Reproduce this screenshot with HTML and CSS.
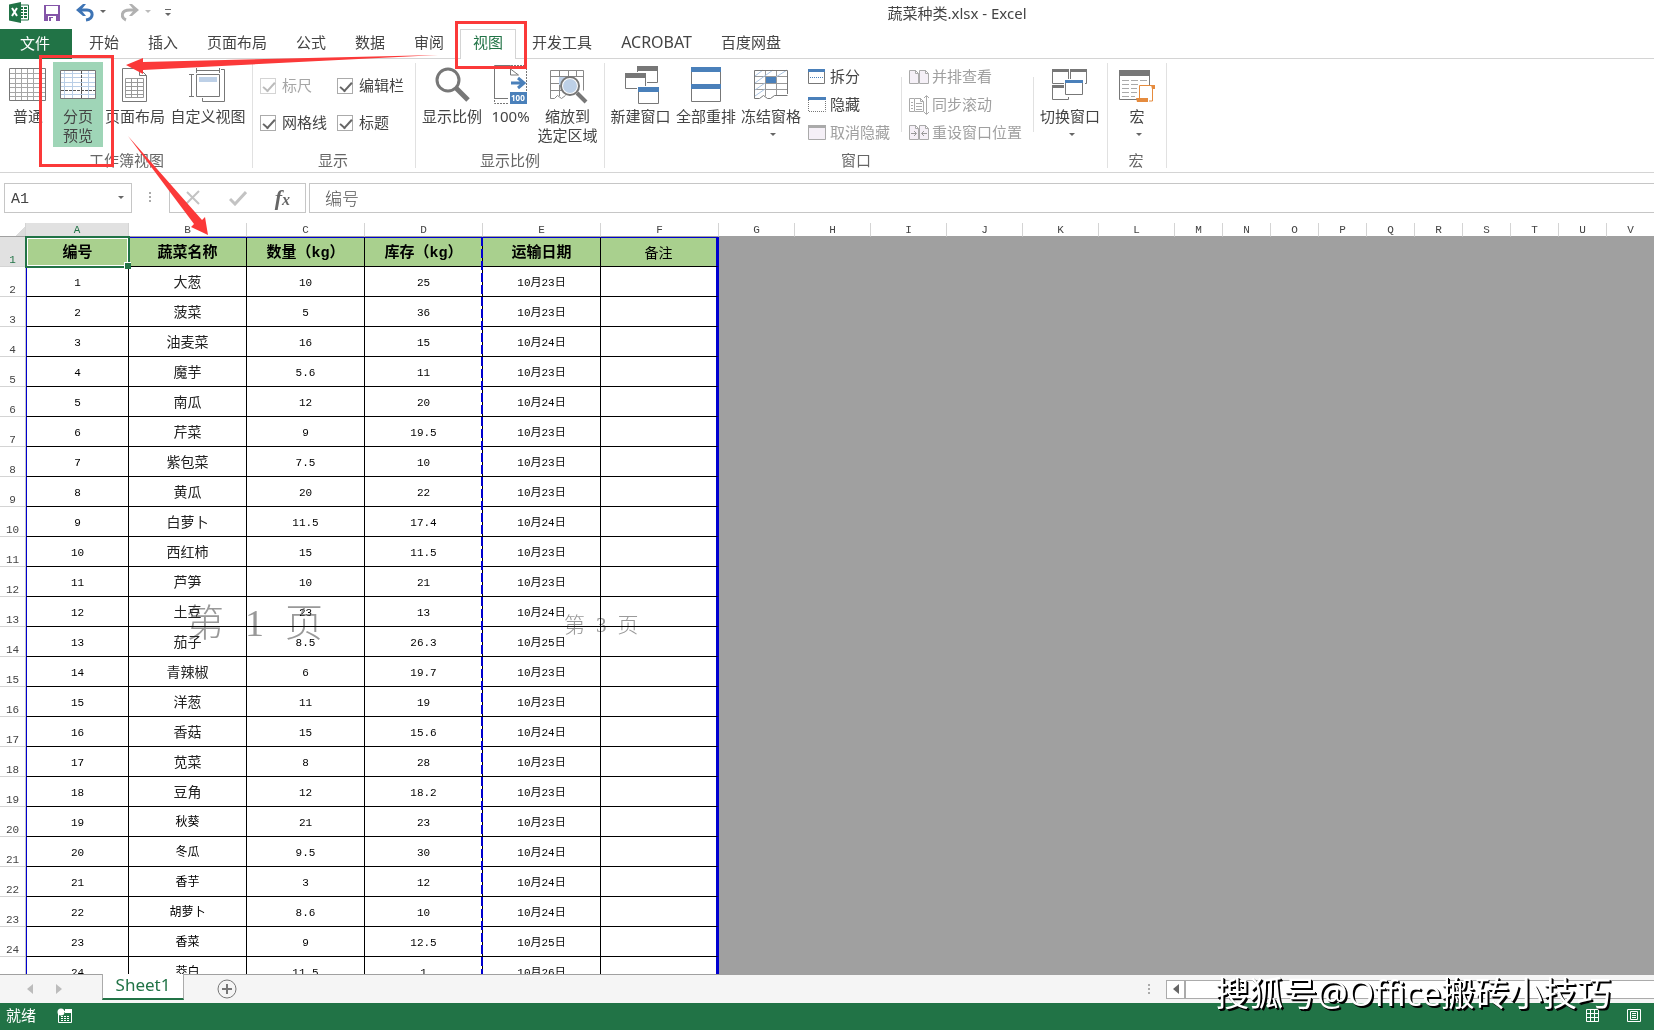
FILE: index.html
```html
<!DOCTYPE html>
<html lang="zh-CN">
<head>
    <meta charset="UTF-8">
    <meta name="viewport" content="width=device-width, initial-scale=1.0">
    <title>蔬菜种类.xlsx - Excel</title>
    <link rel="stylesheet" href="styles.css">
</head>
<body>
    <header class="title-bar">
        <div class="quick-access">
            <svg class="logo" width="22" height="22" viewBox="0 0 22 22">
                <path d="M11 3h9.500v15H11z" fill="#fff" stroke="#217346"/>
                <path d="M13 6h2M16 6h3M13 9h2M16 9h3M13 12h2M16 12h3M13 15h2M16 15h3" stroke="#217346" stroke-width="2"/>
                <path d="M1 2.500L13 0v21L1 18.500z" fill="#217346"/>
                <path d="M4 6l5 8M9 6l-5 8" stroke="#fff" stroke-width="2"/>
            </svg>
            <button class="save" aria-label="保存">
                <svg width="16" height="16" viewBox="0 0 16 16">
                    <path d="M0 0h16v16H0z" fill="#8455a8"/>
                    <path d="M2 1h12v8H2zM4 11h8v5H4z" fill="#fff"/>
                    <path d="M5 12h4v4H5z" fill="#8455a8"/><path d="M7 13h2v3H7z" fill="#fff"/>
                </svg>
            </button>
            <button class="undo" aria-label="撤消">
                <svg width="30" height="18" viewBox="0 0 30 18">
                    <path d="M3 6h8c7 0 7 9-1 10" fill="none" stroke="#3e74b5" stroke-width="3"/>
                    <path d="M0 6l7-6h3L5 6l5 6H7z" fill="#3e74b5"/>
                    <path d="M24 6h6l-3 3z" fill="#666"/>
                </svg>
            </button>
            <button class="redo" aria-label="恢复">
                <svg width="30" height="18" viewBox="0 0 30 18">
                    <path d="M15 6H9C-1 6 0 14 5 16" fill="none" stroke="#b1b1b1" stroke-width="3"/>
                    <path d="M18 6l-7-6H8l5 6-5 6h3z" fill="#b1b1b1"/>
                    <path d="M24 6h6l-3 3z" fill="#bbb"/>
                </svg>
            </button>
            <button class="customize" aria-label="自定义快速访问工具栏">
                <svg width="6" height="8" viewBox="0 0 6 8"><path d="M0 .500h6" stroke="#666"/><path d="M0 4h6L3 7z" fill="#666"/></svg>
            </button>
        </div>
        <h1>蔬菜种类.xlsx - Excel</h1>
    </header>

    <nav class="tabs">
        <button class="file">文件</button>
        <button>开始</button>
        <button>插入</button>
        <button>页面布局</button>
        <button>公式</button>
        <button>数据</button>
        <button>审阅</button>
        <button class="active">视图</button>
        <button>开发工具</button>
        <button class="latin">ACROBAT</button>
        <button>百度网盘</button>
    </nav>

    <div class="ribbon">
        <section class="group group-views">
            <div class="items">
                <button class="big w50">
                    <svg width="40" height="42" viewBox="0 0 40 42">
                        <path d="M7.500 4v32M13.500 4v32M19.500 4v32M25.500 4v32M31.500 4v32M2 8.500h35M2 13.500h35M2 18.500h35M2 22.500h35M2 27.500h35M2 31.500h35" stroke="#a6a6a6"/>
                        <path d="M1.500 3.500h36v32h-36z" fill="none" stroke="#777"/>
                    </svg>
                    <span>普通</span>
                </button>
                <button class="big w50 pressed">
                    <svg width="40" height="42" viewBox="0 0 40 42">
                        <path d="M2.500 5.500h35v28h-35z" fill="#fff" stroke="#777"/>
                        <path d="M6.500 6v27M14.500 6v27M30.500 6v27M3 8.500h34M3 12.500h34M3 17.500h34M3 21.500h34M3 29.500h34" stroke="#b9cee6"/>
                        <path d="M23.500 6v27M3 25.500h34" stroke="#555" stroke-dasharray="3 1"/>
                    </svg>
                    <span>分页<br>预览</span>
                </button>
                <button class="big w64">
                    <svg width="40" height="42" viewBox="0 0 40 42">
                        <path d="M7.500 3.500h17l7 7v26h-24zM24.500 3.500v7h7" fill="#fff" stroke="#777"/>
                        <path d="M10.500 13.500h18v19h-18zM16.500 14v18M22.500 14v18M11 17.500h17M11 21.500h17M11 25.500h17M11 29.500h17" fill="none" stroke="#999"/>
                    </svg>
                    <span>页面布局</span>
                </button>
                <button class="big w82">
                    <svg width="40" height="42" viewBox="0 0 40 42">
                        <path d="M8.500 9.500h23v22h-23z" fill="#fff" stroke="#777"/>
                        <path d="M11 12h18v5H11z" fill="#bdd0e7"/>
                        <path d="M3.500 10v21M1 9.500h5M1 31.500h5M8 5.500h23M8.500 3v5M31.500 3v5M33 4.500h3.500v32h-22V33" fill="none" stroke="#777"/>
                    </svg>
                    <span>自定义视图</span>
                </button>
            </div>
            <h2>工作簿视图</h2>
        </section>

        <section class="group group-show">
            <div class="items checks">
                <label class="off"><input type="checkbox" checked disabled>标尺</label>
                <label><input type="checkbox" checked>编辑栏</label>
                <label><input type="checkbox" checked>网格线</label>
                <label><input type="checkbox" checked>标题</label>
            </div>
            <h2>显示</h2>
        </section>

        <section class="group group-zoom">
            <div class="items">
                <button class="big w68">
                    <svg width="40" height="42" viewBox="0 0 40 42">
                        <circle cx="16" cy="15" r="11" fill="none" stroke="#777" stroke-width="3"/>
                        <path d="M24 23l12 12" stroke="#777" stroke-width="5"/>
                    </svg>
                    <span>显示比例</span>
                </button>
                <button class="big w49">
                    <svg width="40" height="42" viewBox="0 0 40 42">
                        <path d="M3.500 34V.500h16V4l8 6M19.500 3v7h8M3 33.500h14" fill="none" stroke="#777"/>
                        <path d="M20 .500h15.500V27M3.500 35v3.500H18" fill="none" stroke="#777" stroke-dasharray="2 1"/>
                        <path d="M20 18h12M27 13l6 5-6 5" fill="none" stroke="#4a80ba" stroke-width="3"/>
                        <path d="M19 27h17v12H19z" fill="#4a80ba"/>
                        <text x="20" y="36" class="badge-text">100</text>
                    </svg>
                    <span>100%</span>
                </button>
                <button class="big w65">
                    <svg width="40" height="42" viewBox="0 0 40 42">
                        <path d="M2.500 5.500h33v20M2.500 5.500v28h4l3-3 4 3 4-3M11.500 6v25M20.500 6v8M28.500 6v6M3 11.500h33M3 18.500h11M3 25.500h11" fill="none" stroke="#888"/>
                        <path d="M11 12h9v8h-9z" fill="#bdd0e7"/>
                        <circle cx="22" cy="21" r="9" fill="#fff" stroke="#777" stroke-width="2"/>
                        <circle cx="22" cy="21" r="7" fill="#bdd0e7"/>
                        <path d="M29 28l9 9" stroke="#777" stroke-width="4"/>
                    </svg>
                    <span>缩放到<br>选定区域</span>
                </button>
            </div>
            <h2>显示比例</h2>
        </section>

        <section class="group group-window">
            <div class="items">
                <button class="big w67">
                    <svg width="40" height="42" viewBox="0 0 40 42">
                        <path d="M16.500 1.500h20v16h-20z" fill="#fff" stroke="#777"/>
                        <path d="M16 1h21v5H16z" fill="#777"/>
                        <path d="M3 7h23v18H3z" fill="#fff"/>
                        <path d="M4.500 8.500h20v15h-20z" fill="#fff" stroke="#777"/>
                        <path d="M4 8h21v5H4z" fill="#777"/>
                        <path d="M16 21h22v18H16z" fill="#fff"/>
                        <path d="M17.500 22.500h20v16h-20z" fill="#fff" stroke="#777"/>
                        <path d="M17 22h21v5H17z" fill="#4a80ba"/>
                    </svg>
                    <span>新建窗口</span>
                </button>
                <button class="big w64">
                    <svg width="40" height="42" viewBox="0 0 40 42">
                        <path d="M5.500 2.500h29v34h-29z" fill="#fff" stroke="#777"/>
                        <path d="M5 2h30v5H5zM5 19h30v5H5z" fill="#4a80ba"/>
                    </svg>
                    <span>全部重排</span>
                </button>
                <button class="big w66">
                    <svg width="40" height="42" viewBox="0 0 40 42">
                        <path d="M14.500 6v25M25.500 6v25M4 11.500h33M4 18.500h33M4 24.500h33" stroke="#999"/>
                        <path d="M4 11l8-6M4 18L22 5M4 25l10-7M4 31l10-7M25 12l11-7" stroke="#a9c3e0"/>
                        <path d="M36.500 29V5.500h-33v28h5l4-3 4 3h3l4-3h13" fill="none" stroke="#777"/>
                        <path d="M15 12h10v6H15z" fill="#4a80ba"/>
                    </svg>
                    <span>冻结窗格</span>
                    <i class="caret"></i>
                </button>
                <div class="stack stack-split">
                    <button>
                        <svg width="20" height="18" viewBox="0 0 20 18"><path d="M.500 1.500h16v14H.500z" fill="#fff" stroke="#777"/><path d="M0 1h17v3H0z" fill="#4a80ba"/><path d="M2 9.500h14" stroke="#4a80ba" stroke-dasharray="1 1"/></svg>
                        拆分
                    </button>
                    <button>
                        <svg width="20" height="18" viewBox="0 0 20 18"><path d="M.500 4v11.500h17V4" fill="none" stroke="#777" stroke-dasharray="1 1"/><path d="M0 1h18v3H0z" fill="#4a80ba"/></svg>
                        隐藏
                    </button>
                    <button disabled>
                        <svg width="20" height="18" viewBox="0 0 20 18"><path d="M.500 1.500h17v14H.500z" fill="#f5f0f7" stroke="#aaa"/><path d="M0 1h18v3H0z" fill="#aaa"/></svg>
                        取消隐藏
                    </button>
                </div>
                <div class="stack stack-side">
                    <button disabled>
                        <svg width="20" height="20" viewBox="0 0 20 20"><path d="M.500 3.500h6l3 3v10h-9zM10.500 3.500h6l3 3v10h-9zM6.500 3v3.500h3M16.500 3v3.500h3" fill="#f5f0f7" stroke="#aaa"/></svg>
                        并排查看
                    </button>
                    <button disabled>
                        <svg width="20" height="20" viewBox="0 0 20 20"><path d="M5.500 3.500h6l3 3v10h-9zM11.500 3v3.500h3M5 3.500H.500v13H5M2 7.500h2M2 10.500h2M2 13.500h2M7 8.500h6M7 11.500h6M7 14.500h6M17.500 1v18M15 3l2.500-2.500L20 3M15 17l2.500 2.500L20 17" fill="none" stroke="#aaa"/></svg>
                        同步滚动
                    </button>
                    <button disabled>
                        <svg width="20" height="20" viewBox="0 0 20 20"><path d="M.500 2.500h6l3 3v11h-9zM10.500 2.500h6l3 3v11h-9zM6.500 2v3.500h3M16.500 2v3.500h3" fill="#f5f0f7" stroke="#aaa"/><path d="M2 10.500h5M5 8l2.500 2.500L5 13M18 10.500h-5M15 8l-2.500 2.500L15 13" fill="none" stroke="#999"/></svg>
                        重设窗口位置
                    </button>
                </div>
                <button class="big w68">
                    <svg width="40" height="42" viewBox="0 0 40 42">
                        <path d="M2.500 4.500h16v14h-16zM20.500 4.500h16v14h-16zM2.500 20.500h16v14h-16z" fill="#fff" stroke="#777"/>
                        <path d="M2 4h17v3H2zM20 4h17v3H20zM2 20h17v3H2z" fill="#777"/>
                        <path d="M14 14h21v18H14z" fill="#fff"/>
                        <path d="M15.500 15.500h17v14h-17z" fill="#fff" stroke="#777"/>
                        <path d="M15 15h18v3H15z" fill="#4a80ba"/>
                    </svg>
                    <span>切换窗口</span>
                    <i class="caret"></i>
                </button>
            </div>
            <h2>窗口</h2>
        </section>

        <section class="group group-macro">
            <div class="items">
                <button class="big w58">
                    <svg width="40" height="42" viewBox="0 0 40 42">
                        <path d="M2.500 5.500h30v29h-30z" fill="#fff" stroke="#777"/>
                        <path d="M2 5h31v6H2z" fill="#777"/>
                        <path d="M5 15.500h7M14 15.500h7M23 15.500h7M5 19.500h7M14 19.500h7M5 23.500h7M14 23.500h7M5 27.500h7M14 27.500h7M5 31.500h7M14 31.500h4" stroke="#aaa"/>
                        <path d="M20 20h15v16H20z" fill="#fff"/>
                        <path d="M22.500 33V20.500h13M35.500 21v15H32" fill="none" stroke="#e58b3e"/>
                        <path d="M19 33h12v4H20zM34 20h4v4h-3z" fill="#e58b3e"/>
                    </svg>
                    <span>宏</span>
                    <i class="caret"></i>
                </button>
            </div>
            <h2>宏</h2>
        </section>
    </div>

    <div class="formula-bar">
        <div class="name-box">
            <input type="text" value="A1" aria-label="名称框">
            <i class="caret"></i>
        </div>
        <i class="dots"></i>
        <div class="formula-buttons">
            <button aria-label="取消"><svg width="16" height="16" viewBox="0 0 16 16"><path d="M2 2l12 12M14 1L1 14" stroke="#c3c3c3" stroke-width="2"/></svg></button>
            <button aria-label="输入"><svg width="18" height="16" viewBox="0 0 18 16"><path d="M1 9l5 5L17 2" fill="none" stroke="#c3c3c3" stroke-width="3"/></svg></button>
            <button class="fx" aria-label="插入函数">f<sub>x</sub></button>
        </div>
        <input class="formula" type="text" value="编号" aria-label="编辑栏">
    </div>

    <main class="grid">
        <table>
            <colgroup>
                <col class="col-index"><col class="col-a"><col class="col-data" span="5">
                <col class="col-wide" span="6"><col class="col-narrow" span="10">
            </colgroup>
            <thead><tr id="letters"></tr></thead>
            <tbody id="rows"></tbody>
        </table>
        <div class="page-break"></div>
        <div class="page-mark page-one"><span>第</span><span>1</span><span>页</span></div>
        <div class="page-mark page-three"><span>第</span><span>3</span><span>页</span></div>
    </main>

    <div class="sheet-bar">
        <div class="sheet-nav">
            <button aria-label="上一个"><svg width="6" height="10" viewBox="0 0 6 10"><path d="M6 0v10L0 5z" fill="#bcbcbc"/></svg></button>
            <button aria-label="下一个"><svg width="6" height="10" viewBox="0 0 6 10"><path d="M0 0v10l6-5z" fill="#bcbcbc"/></svg></button>
        </div>
        <button class="sheet-tab">Sheet1</button>
        <button class="add-sheet" aria-label="新工作表">
            <svg width="20" height="20" viewBox="0 0 20 20"><circle cx="10" cy="10" r="9" fill="none" stroke="#777"/><path d="M5 10h10M10 5v10" stroke="#777" stroke-width="2"/></svg>
        </button>
        <div class="scroll">
            <i class="dots"></i>
            <button aria-label="向左滚动"><svg width="6" height="10" viewBox="0 0 6 10"><path d="M6 0v10L0 5z" fill="#666"/></svg></button>
            <div class="track"></div>
        </div>
    </div>

    <footer class="status-bar">
        <span>就绪</span>
        <svg width="16" height="16" viewBox="0 0 16 16">
            <path d="M1.500 3.500h13v11h-13z" fill="none" stroke="#fff"/><path d="M8 1h7v4H8z" fill="#fff"/><circle cx="4" cy="4" r="3.500" fill="#fff"/>
            <path d="M4 8.500h9M4 10.500h9M4 12.500h9" stroke="#fff" stroke-dasharray="2 1"/>
        </svg>
        <div class="view-buttons">
            <button aria-label="普通视图"><svg width="14" height="14" viewBox="0 0 14 14"><path d="M.500.500h12v12H.500zM4.500 0v13M8.500 0v13M0 4.500h13M0 8.500h13" fill="none" stroke="#fff"/></svg></button>
            <button aria-label="页面布局视图"><svg width="14" height="14" viewBox="0 0 14 14"><path d="M.500.500h13v12H.500zM3.500 2.500h7v8h-7zM5 4.500h4M5 6.500h4M5 8.500h4" fill="none" stroke="#fff"/></svg></button>
        </div>
    </footer>

    <!-- tutorial marks drawn over the window -->
    <svg class="marks" width="540" height="240" viewBox="0 0 540 240">
        <path d="M40.500 56.500h72v109h-72zM456.500 22.500h69v45h-69z" fill="none" stroke="#fb3939" stroke-width="3"/>
        <path d="M126 65l17-7v4l295-7-295 15v4z" fill="#fb3939"/>
        <path d="M128 136l74 84 3-3 3 18-17-8 3-3z" fill="#fb3939"/>
    </svg>
    <div class="watermark">搜狐号@Office搬砖小技巧</div>

    <script>
        // name, amount, stock, date
        var data = [
            ['大葱', '10', '25', '10月23日'],
            ['菠菜', '5', '36', '10月23日'],
            ['油麦菜', '16', '15', '10月24日'],
            ['魔芋', '5.6', '11', '10月23日'],
            ['南瓜', '12', '20', '10月24日'],
            ['芹菜', '9', '19.5', '10月23日'],
            ['紫包菜', '7.5', '10', '10月23日'],
            ['黄瓜', '20', '22', '10月23日'],
            ['白萝卜', '11.5', '17.4', '10月24日'],
            ['西红柿', '15', '11.5', '10月23日'],
            ['芦笋', '10', '21', '10月23日'],
            ['土豆', '23', '13', '10月24日'],
            ['茄子', '8.5', '26.3', '10月25日'],
            ['青辣椒', '6', '19.7', '10月23日'],
            ['洋葱', '11', '19', '10月23日'],
            ['香菇', '15', '15.6', '10月24日'],
            ['苋菜', '8', '28', '10月23日'],
            ['豆角', '12', '18.2', '10月23日'],
            ['秋葵', '21', '23', '10月23日'],
            ['冬瓜', '9.5', '30', '10月24日'],
            ['香芋', '3', '12', '10月24日'],
            ['胡萝卜', '8.6', '10', '10月24日'],
            ['香菜', '9', '12.5', '10月25日'],
            ['茭白', '11.5', '1', '10月26日']
        ];

        // Column letters A to V
        var letters = '<th class="corner"></th>';
        'ABCDEFGHIJKLMNOPQRSTUV'.split('').forEach(function (letter) {
            letters += '<th' + (letter === 'A' ? ' class="current"' : '') + '>' + letter + '</th>';
        });
        document.getElementById('letters').innerHTML = letters;

        // Header row, then one row for each vegetable
        var rows = '<tr class="heading"><th class="current">1</th><td class="selected">编号</td><td>蔬菜名称</td>' +
            '<td>数量（kg）</td><td>库存（kg）</td><td>运输日期</td><td class="note">备注</td></tr>';
        data.forEach(function (item, i) {
            var nameClass = i < 18 ? 'name' : 'name small';
            rows += '<tr><th>' + (i + 2) + '</th><td>' + (i + 1) + '</td><td class="' + nameClass + '">' + item[0] + '</td>' +
                '<td>' + item[1] + '</td><td>' + item[2] + '</td><td>' + item[3] + '</td><td></td></tr>';
        });
        document.getElementById('rows').innerHTML = rows;
    </script>
</body>
</html>
```

FILE: styles.css
```css
/* Global styles */
* {
    box-sizing: border-box;
}
body {
    display: flex;
    flex-direction: column;
    position: relative;
    height: 100vh;
    margin: 0;
    overflow: hidden;
    background: #fff;
    color: #444;
    font-family: "Noto Sans", "Noto Sans CJK SC", sans-serif;
    font-size: 15px;
    line-height: 19px;
}
button, input {
    margin: 0;
    padding: 0;
    border: none;
    background: none;
    color: inherit;
    font: inherit;
}
button svg {
    display: block;
}
h1, h2 {
    margin: 0;
    font-size: 15px;
    font-weight: normal;
}
.caret {
    border: 3px solid transparent;
    border-top-color: #666;
    border-bottom: none;
}
.dots {
    width: 2px;
    height: 11px;
    background: repeating-linear-gradient(#aaa 0 2px, transparent 2px 4px);
}

/* Title bar and tabs */
.title-bar {
    display: flex;
    flex: none;
    height: 29px;
}
.title-bar h1 {
    flex: 1;
    padding: 4px 0 0 86px;
    text-align: center;
}
.quick-access {
    display: flex;
    align-items: center;
    width: 174px;
    padding: 0 0 3px 8px;
}
.save {
    margin-left: 14px;
}
.undo {
    margin-left: 16px;
}
.redo {
    margin-left: 15px;
}
.customize {
    margin-left: 14px;
}
.tabs {
    display: flex;
    flex: none;
    gap: 3px;
    height: 30px;
    border-bottom: 1px solid #d4d4d4;
}
.tabs button {
    height: 30px;
    padding: 0 13px 4px;
}
.tabs .file {
    width: 72px;
    margin-right: 1px;
    padding: 0 15px 2px 13px;
    background: #217346;
    color: #fff;
}
.tabs .active {
    border: 1px solid #d4d4d4;
    border-bottom: none;
    padding: 0 12px 4px;
    background: #fff;
    color: #217346;
}
.tabs .latin {
    font-size: 16px;
}

/* Ribbon */
.ribbon {
    display: flex;
    flex: none;
    height: 114px;
    padding-top: 3px;
    border-bottom: 1px solid #d4d4d4;
}
.group {
    position: relative;
    display: flex;
    flex: none;
    flex-direction: column;
}
.group::after {
    content: "";
    position: absolute;
    top: 1px;
    right: 0;
    width: 1px;
    height: 105px;
    background: #e1e1e1;
}
.group h2 {
    padding-right: 3px;
    color: #666;
    text-align: center;
    line-height: 20px;
}
.items {
    display: flex;
    height: 88px;
}
.group-views {
    width: 253px;
    padding-left: 3px;
}
.group-show {
    width: 163px;
}
.group-zoom {
    width: 189px;
    padding-left: 2px;
}
.group-window {
    width: 503px;
    padding-left: 2px;
}
.group-macro {
    width: 59px;
}
.big {
    display: flex;
    flex: none;
    flex-direction: column;
    align-items: center;
    height: 85px;
    padding-top: 3px;
    white-space: nowrap;
}
.big .caret {
    margin: 7px 0 0 3px;
}
.pressed {
    position: relative;
    background: #9fd5b7;
}
.badge-text {
    fill: #fff;
    font-size: 8px;
    font-weight: bold;
}
.w49 { width: 49px; }
.w50 { width: 50px; }
.w58 { width: 58px; }
.w64 { width: 64px; }
.w65 { width: 65px; }
.w66 { width: 66px; }
.w67 { width: 67px; }
.w68 { width: 68px; }
.w82 { width: 82px; }
.checks {
    display: grid;
    grid-template-columns: 77px 80px;
    grid-template-rows: 37px 37px;
    padding: 5px 0 0 7px;
}
.checks label {
    display: flex;
    align-items: center;
    gap: 6px;
    white-space: nowrap;
}
.checks input {
    appearance: none;
    width: 16px;
    height: 16px;
    border: 1px solid #ababab;
}
.checks input:checked::after {
    content: "";
    display: block;
    width: 10px;
    height: 5px;
    margin: 3px 2px;
    border: solid #666;
    border-width: 0 0 2px 2px;
    transform: rotate(-48deg);
}
.checks .off {
    color: #a6a6a6;
}
.checks .off input {
    border-color: #d4d4d4;
}
.checks .off input::after {
    border-color: #bbb;
}
.stack {
    display: flex;
    flex-direction: column;
    gap: 9px;
    padding-top: 5px;
    background: linear-gradient(#e1e1e1, #e1e1e1) right 15px / 1px 55px no-repeat;
}
.stack button {
    display: flex;
    align-items: center;
    gap: 3px;
    height: 19px;
    white-space: nowrap;
}
.stack button:disabled {
    color: #a0a0a0;
}
.stack-split {
    width: 98px;
    padding-left: 4px;
}
.stack-split button {
    gap: 2px;
}
.stack-side {
    width: 132px;
    margin-right: 2px;
    padding-left: 7px;
}

/* Formula bar */
.formula-bar {
    display: flex;
    flex: none;
    align-items: center;
    height: 50px;
    padding: 0 0 1px 4px;
    font-family: "Liberation Mono", "Noto Sans CJK SC", monospace;
}
.name-box {
    display: flex;
    align-items: center;
    width: 128px;
    height: 30px;
    padding: 0 7px 0 6px;
    border: 1px solid #c6c6c6;
}
.name-box input {
    flex: 1;
    min-width: 0;
    padding-top: 4px;
}
.formula-bar .dots {
    margin: 0 18px 0 17px;
}
.formula-buttons {
    display: flex;
    align-items: center;
    justify-content: space-between;
    width: 137px;
    height: 30px;
    padding: 0 15px;
    border: 1px solid #c6c6c6;
}
.fx {
    color: #666;
    font: italic bold 22px/22px "Liberation Serif", serif;
}
.fx sub {
    font-size: 16px;
    line-height: 0;
    vertical-align: 0;
}
.formula {
    flex: 1;
    height: 30px;
    margin-left: 3px;
    padding: 0 15px;
    border: 1px solid #c6c6c6;
    border-right: none;
    color: #555;
    font-size: 17px;
    font-weight: 300;
}

/* Worksheet */
.grid {
    position: relative;
    flex: 1;
    min-height: 0;
    overflow: hidden;
    background: #a0a0a0;
    font-family: "Liberation Mono", "Noto Sans CJK SC", monospace;
    font-size: 11px;
    line-height: 14px;
}
.grid table {
    width: 1655px;
    table-layout: fixed;
    border-spacing: 0;
}
.col-index { width: 26px; }
.col-a { width: 103px; }
.col-data { width: 118px; }
.col-wide { width: 76px; }
.col-narrow { width: 48px; }
.grid th, .grid td {
    padding: 0;
    text-align: center;
}
.grid th {
    background: #fff;
    color: #444;
    font-weight: normal;
}
.grid thead th {
    height: 14px;
    padding-top: 2px;
    border-right: 1px solid #d4d4d4;
    border-bottom: 1px solid #a0a0a0;
    line-height: 11px;
}
.grid thead .corner {
    background: linear-gradient(135deg, #fff 75%, #dcdcdc 75%);
}
.grid tbody th {
    height: 30px;
    border-right: 1px solid #c6c6c6;
    border-bottom: 1px solid #d4d4d4;
    line-height: 12px;
    vertical-align: bottom;
}
.grid thead .current, .grid tbody .current {
    background: #e1e1e1;
    color: #217346;
}
.grid td {
    height: 30px;
    padding-top: 2px;
    border-right: 1px solid #000;
    border-bottom: 1px solid #000;
    background: #fff;
    color: #000;
}
.grid td:nth-child(2) {
    border-left: 1px solid #0000d0;
}
.grid td:last-child {
    border-right: 3px solid #0000d0;
}
.grid .name {
    color: #222;
    font-size: 14px;
}
.grid .small {
    color: #000;
    font-size: 12px;
}
.grid .heading td {
    padding-top: 3px;
    border-top: 1px solid #0000d0;
    background: #a9d08e;
    font-size: 15px;
    font-weight: bold;
}
.grid .heading .note {
    font-size: 14px;
    font-weight: normal;
}
.selected {
    position: relative;
}
.selected::before {
    content: "";
    position: absolute;
    inset: -2px -2px -2px -2px;
    border: 2px solid #217346;
    box-shadow: inset 0 0 0 1px #fff;
}
.selected::after {
    content: "";
    position: absolute;
    right: -3px;
    bottom: -3px;
    width: 6px;
    height: 6px;
    border: solid #fff;
    border-width: 1px 0 0 1px;
    background: #217346;
}
.page-break {
    position: absolute;
    top: 14px;
    bottom: 0;
    left: 481px;
    width: 2px;
    background: repeating-linear-gradient(#0000d0 0 9px, transparent 9px 12px);
}
.page-mark {
    position: absolute;
    display: flex;
    color: #999;
    font-family: "Liberation Serif", "Noto Sans CJK SC", serif;
    font-weight: 300;
    mix-blend-mode: darken;
}
.page-one {
    top: 381px;
    left: 186px;
    gap: 21px;
    font-size: 38px;
    line-height: 38px;
}
.page-three {
    top: 392px;
    left: 564px;
    gap: 11px;
    font-size: 21px;
    line-height: 21px;
}

/* Sheet tabs and status bar */
.sheet-bar {
    display: flex;
    flex: none;
    height: 29px;
    border-top: 1px solid #a0a0a0;
    background: #f5f5f5;
}
.sheet-nav {
    display: flex;
    gap: 23px;
    width: 102px;
    padding-left: 27px;
}
.sheet-tab {
    width: 82px;
    height: 26px;
    margin-top: -1px;
    padding-bottom: 4px;
    border: 1px solid #ababab;
    border-width: 0 1px 2px;
    border-bottom-color: #217346;
    background: #fff;
    color: #217346;
    font-size: 17px;
}
.add-sheet {
    margin-left: 33px;
}
.scroll {
    display: flex;
    align-items: center;
    width: 506px;
    margin-left: auto;
}
.scroll .dots {
    margin-right: 16px;
}
.scroll button {
    display: flex;
    align-items: center;
    justify-content: center;
    width: 19px;
    height: 19px;
    border: 1px solid #ababab;
    background: #fff;
}
.track {
    flex: 1;
    height: 19px;
    border: 1px solid #ababab;
    border-right: none;
    background: #fff;
}
.status-bar {
    display: flex;
    flex: none;
    align-items: center;
    gap: 21px;
    height: 27px;
    padding: 0 13px 2px 6px;
    background: #217346;
    color: #fff;
}
.view-buttons {
    display: flex;
    gap: 27px;
    margin-left: auto;
}

/* Marks over the window */
.marks {
    position: absolute;
    top: 0;
    left: 0;
    pointer-events: none;
}
.watermark {
    position: absolute;
    right: 43px;
    bottom: 17px;
    color: #fff;
    font-family: "Open Sans", "Noto Sans CJK SC", sans-serif;
    font-size: 34px;
    line-height: 40px;
    text-shadow: 1px 1px 0 #000, 2px 2px 0 #000;
    white-space: nowrap;
}
```
